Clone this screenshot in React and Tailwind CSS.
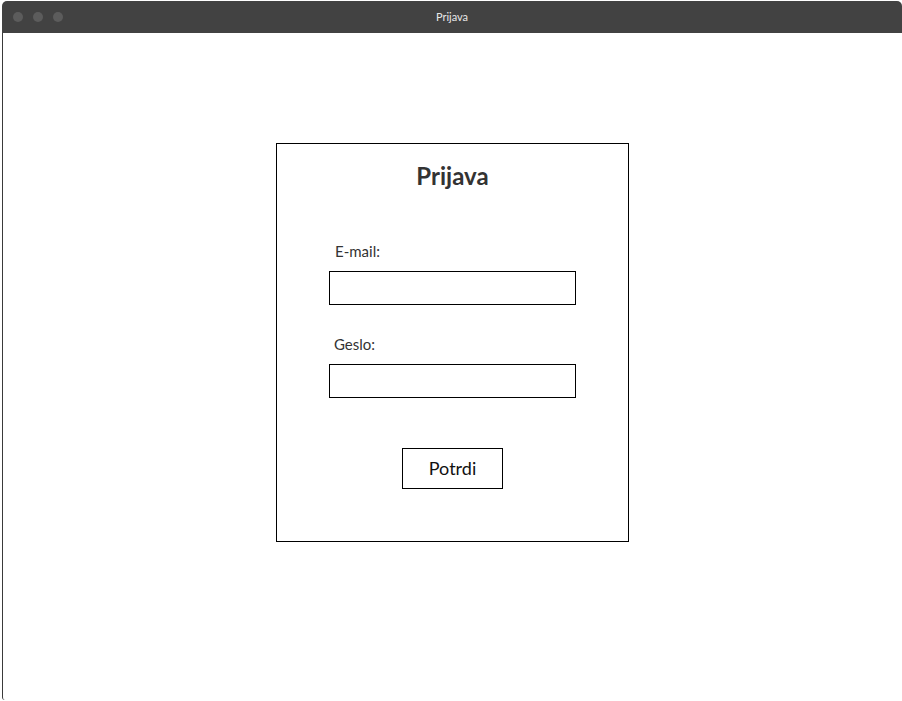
import { useState } from "react";

const App = () => {
  const [email, setEmail] = useState("");
  const [geslo, setGeslo] = useState("");

  return (
    <div
      className="w-[902px] h-[701px] bg-white pt-px pl-[2px]"
      style={{ fontFamily: '"Lato", "Noto Sans", sans-serif' }}
    >
      <div className="w-[900px] h-[699px] flex flex-col">
        {/* title bar */}
        <div className="h-[32px] bg-[#424242] rounded-t-[5px] flex items-center relative">
          <div className="flex gap-[10px] pl-[11px]">
            <span className="w-[10px] h-[10px] rounded-full bg-[#5c5c5c]" />
            <span className="w-[10px] h-[10px] rounded-full bg-[#5c5c5c]" />
            <span className="w-[10px] h-[10px] rounded-full bg-[#5c5c5c]" />
          </div>
          <div className="absolute inset-0 flex items-center justify-center text-[11px] text-[#e8e8e8]">
            Prijava
          </div>
        </div>

        {/* window body */}
        <div className="flex-1 border-l border-[#3a3a3a] rounded-bl-[3px] pt-[110px]">
          <div className="mx-auto w-[353px] h-[399px] border border-black flex flex-col items-center">
            <h1 className="mt-[17px] text-[24px] leading-[30px] font-bold text-[#333]">
              Prijava
            </h1>

            <form
              className="w-[247px] mt-[50px] flex flex-col"
              onSubmit={(e) => e.preventDefault()}
            >
              <label className="pl-[6px] text-[15px] leading-[20px] text-[#333]">
                E-mail:
              </label>
              <input
                type="email"
                value={email}
                onChange={(e) => setEmail(e.target.value)}
                className="mt-[10px] h-[34px] border border-black outline-none px-2"
              />

              <label className="mt-[29px] pl-[5px] text-[15px] leading-[20px] text-[#333]">
                Geslo:
              </label>
              <input
                type="password"
                value={geslo}
                onChange={(e) => setGeslo(e.target.value)}
                className="mt-[10px] h-[34px] border border-black outline-none px-2"
              />

              <button
                type="submit"
                className="self-center mt-[50px] w-[101px] h-[41px] border border-black bg-white text-[18px] text-[#111]"
              >
                Potrdi
              </button>
            </form>
          </div>
        </div>
      </div>
    </div>
  );
};

export default App;
